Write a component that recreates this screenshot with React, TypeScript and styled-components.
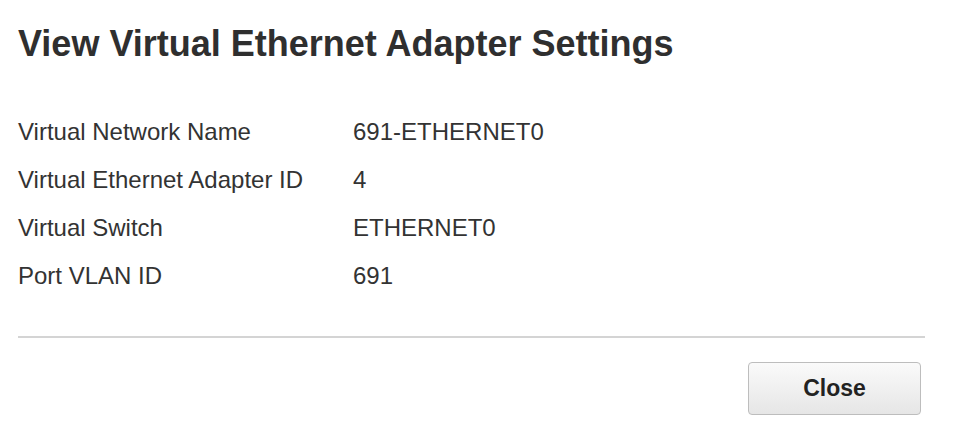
import React from "react";
import styled, { createGlobalStyle } from "styled-components";

const Global = createGlobalStyle`
  html, body { margin: 0; padding: 0; background: #fff; }
  body { font-family: "Liberation Sans", Arial, sans-serif; color: #333; }
`;

const Dialog = styled.div`
  width: 956px;
  height: 430px;
  box-sizing: border-box;
  padding: 22px 31px 0 18px;
  display: flex;
  flex-direction: column;
`;

const Title = styled.h1`
  margin: 0;
  font-size: 36px;
  font-weight: bold;
  line-height: 44px;
  color: #2f2f2f;
`;

const Grid = styled.div`
  margin-top: 42px;
  display: grid;
  grid-template-columns: 335px 1fr;
  grid-auto-rows: 48px;
  align-items: center;
`;

const Cell = styled.div`
  font-size: 24px;
  line-height: 28px;
  color: #333;
`;

const Divider = styled.hr`
  margin: 36px 0 0 0;
  border: 0;
  border-top: 2px solid #d4d4d4;
`;

const Footer = styled.div`
  display: flex;
  justify-content: flex-end;
  margin-top: 24px;
  padding-right: 4px;
`;

const Button = styled.button`
  width: 173px;
  height: 53px;
  border: 1px solid #bdbdbd;
  border-radius: 4px;
  background: linear-gradient(#fafafa, #e6e6e6);
  font-family: "Liberation Sans", Arial, sans-serif;
  font-size: 23px;
  font-weight: bold;
  color: #222;
`;

const rows: [string, string][] = [
  ["Virtual Network Name", "691-ETHERNET0"],
  ["Virtual Ethernet Adapter ID", "4"],
  ["Virtual Switch", "ETHERNET0"],
  ["Port VLAN ID", "691"],
];

export default function App() {
  return (
    <>
      <Global />
      <Dialog>
        <Title>View Virtual Ethernet Adapter Settings</Title>
        <Grid>
          {rows.map(([k, v]) => (
            <React.Fragment key={k}>
              <Cell>{k}</Cell>
              <Cell>{v}</Cell>
            </React.Fragment>
          ))}
        </Grid>
        <Divider />
        <Footer>
          <Button>Close</Button>
        </Footer>
      </Dialog>
    </>
  );
}
